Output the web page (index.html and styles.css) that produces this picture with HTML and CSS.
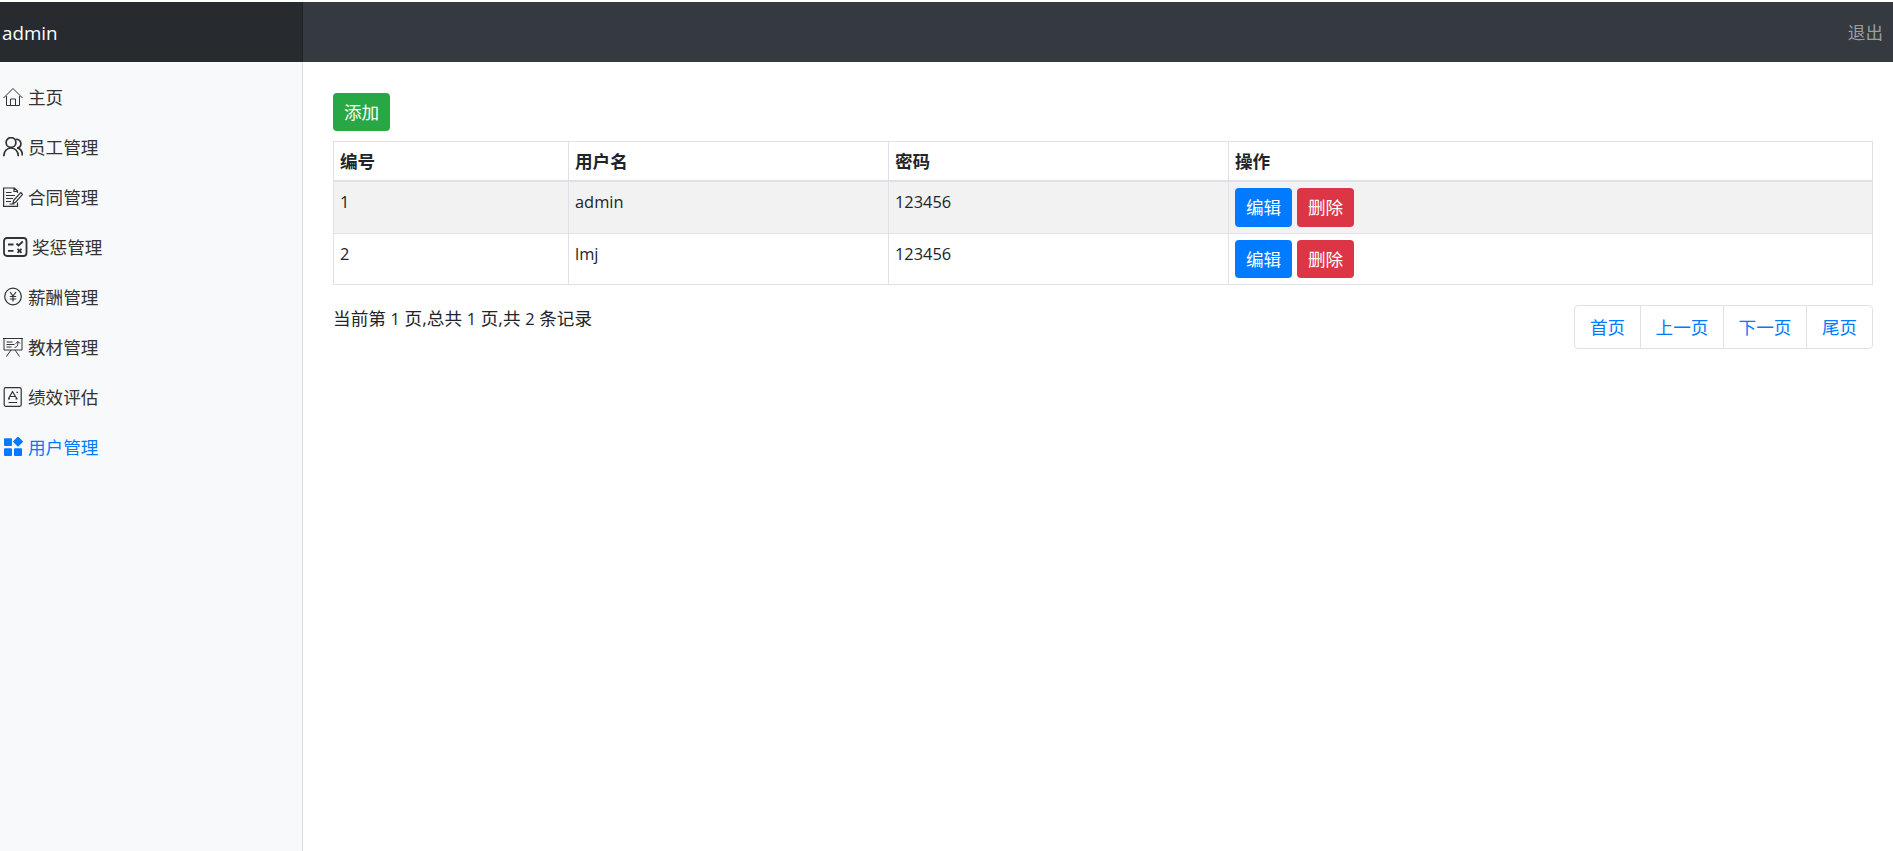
FILE: index.html
```html
<!DOCTYPE html>
<html lang="zh-CN">
<head>
<meta charset="utf-8">
<title>用户管理</title>
<link rel="stylesheet" href="styles.css">
</head>
<body>
<header class="navbar">
  <a class="brand">admin</a>
  <a class="logout">退出</a>
</header>
<div class="layout">
  <nav class="sidebar">
    <a class="nav-link"><svg class="icon thin" viewBox="0 0 20 20"><path d="M.5 11 10 1.500 19.500 11M3.500 9v9.500h13V9M7.500 18.500v-6.500h5v6.500"/></svg>主页</a>
    <a class="nav-link"><svg class="icon bold" viewBox="0 0 20 20"><circle cx="8" cy="5.500" r="4.900"/><path d="M.8 19.300c0-5 3-8.300 7.200-8.300s7.300 3.300 7.300 8.300M12.500 2.300c3.200-.3 5.400 1.700 5.400 4.400 0 2.300-1.600 3.900-3.700 4.200 3.200.8 5.200 3.800 5.200 7.600"/></svg>员工管理</a>
    <a class="nav-link"><svg class="icon" viewBox="0 0 20 20"><path d="M14.500 6V4l-3-3H.6v18.400h13.900V15.500M11 1v3.500h3.500M3 5.500h5.500M3 8.500h9M3 11.500h7M3 14.500h5"/><path d="m17.700 5.500 1.900 1.900-7 7.800-2.600.9.700-2.700zM6.500 17h5"/></svg>合同管理</a>
    <a class="nav-link"><svg class="icon wide" viewBox="0 0 25 20"><rect x="1" y="1" width="22.500" height="18" rx="3"/><path d="M5 7.500h5.500M5 13.800h5.500M13.500 6.500l2 2 4.300-4M14.500 11.800l4 4M18.500 11.800l-4 4"/></svg>奖惩管理</a>
    <a class="nav-link"><svg class="icon" viewBox="0 0 20 20"><circle cx="10" cy="9.500" r="8.300"/><path d="m7 5 3 4 3-4M10 9v5.500M6.800 9.500h6.400M6.800 12h6.400"/></svg>薪酬管理</a>
    <a class="nav-link"><svg class="icon thin" viewBox="0 0 20 20"><path d="M0 1.500h20M1 1.500v11.500h18V1.500M3.500 5h6M3.500 7.500h8M3.500 10h5M11.500 10.300c2.500 0 3.500-1.500 3.500-5.800M12.500 6.500l2.500-2 2 2M8 13l-4.500 6.500M12 13l4.500 6.500"/></svg>教材管理</a>
    <a class="nav-link"><svg class="icon" viewBox="0 0 20 20"><rect x="1.200" y=".7" width="17" height="18.600" rx="1.500"/><path d="m5.500 11.500 4-6.800 4.300 6.800M7 9.500h5.500M13.500 5.300h1.500M5 11.800h2M12.500 11.800h2M5.500 15.500h8.500"/></svg>绩效评估</a>
    <a class="nav-link active"><svg class="icon solid" viewBox="0 0 20 20"><rect x="1" y="1.300" width="8" height="7.800" rx="1"/><rect x="1" y="11.300" width="8" height="7.800" rx="1"/><rect x="11" y="11.300" width="8" height="7.800" rx="1"/><rect x="11.300" y="1" width="7.400" height="7.400" rx=".9" transform="rotate(45 15 4.700)"/></svg>用户管理</a>
  </nav>
  <main class="content">
    <a class="btn btn-success">添加</a>
    <table class="table">
      <colgroup><col class="c-id"><col class="c-name"><col class="c-pass"><col></colgroup>
      <thead><tr><th>编号</th><th>用户名</th><th>密码</th><th>操作</th></tr></thead>
      <tbody>
        <tr class="first striped"><td>1</td><td>admin</td><td>123456</td><td class="ops"><div class="actions"><a class="btn btn-primary">编辑</a><a class="btn btn-danger">删除</a></div></td></tr>
        <tr><td>2</td><td>lmj</td><td>123456</td><td class="ops"><div class="actions"><a class="btn btn-primary">编辑</a><a class="btn btn-danger">删除</a></div></td></tr>
      </tbody>
    </table>
    <div class="footer">
      <div class="summary">当前第 <span class="num">1</span> 页,总共 <span class="num">1</span> 页,共 <span class="num">2</span> 条记录</div>
      <div class="pagination"><a>首页</a><a class="long">上一页</a><a class="long">下一页</a><a>尾页</a></div>
    </div>
  </main>
</div>
</body>
</html>
```
FILE: styles.css
```css
* { box-sizing: border-box; }
body {
  margin: 0;
  padding-top: 2px;
  height: 851px;
  overflow: hidden;
  display: flex;
  flex-direction: column;
  background: #fff;
  color: #212529;
  font: 400 17.6px/26px "Open Sans", "Noto Sans CJK SC", sans-serif;
}
.navbar {
  flex: none;
  height: 60px;
  display: flex;
  justify-content: space-between;
  align-items: center;
  background: #343a40;
}
.brand {
  width: 303px;
  height: 60px;
  padding: 0 2px;
  font-size: 18.8px;
  line-height: 62px;
  color: #fff;
  background: #272b30;
  border-right: 1px solid #202428;
}
.logout { padding-right: 10px; color: #9a9da0; }
.layout { flex: 1; display: flex; min-height: 0; }
.sidebar {
  flex: none;
  width: 303px;
  padding-top: 10px;
  background: #f8f9fa;
  border-right: 1px solid #dcdddf;
}
.nav-link {
  height: 50px;
  padding-left: 3px;
  display: flex;
  align-items: center;
  gap: 5px;
  color: #333;
}
.nav-link.active { color: #007bff; }
.icon {
  flex: none;
  width: 20px;
  height: 20px;
  fill: none;
  stroke: currentColor;
  stroke-width: 1.2;
}
.icon.thin { stroke-width: 1; }
.icon.bold { stroke-width: 1.7; }
.icon.wide { width: 25px; margin-right: -1px; stroke-width: 1.8; }
.icon.solid { fill: currentColor; stroke: none; }
.content { flex: 1; padding: 31px 20px 0 30px; }
.btn {
  display: block;
  width: 57px;
  height: 38px;
  border-radius: 4px;
  line-height: 38px;
  text-align: center;
  color: #fff;
}
.btn-success { background: #28a745; }
.btn-primary { background: #007bff; }
.btn-danger { background: #dc3545; }
.table {
  width: 1540px;
  margin-top: 10px;
  table-layout: fixed;
  border-collapse: separate;
  border-spacing: 0;
  border-top: 1px solid #dee2e6;
  border-left: 1px solid #dee2e6;
}
.c-id { width: 235px; }
.c-name { width: 320px; }
.c-pass { width: 340px; }
.table th, .table td {
  border-right: 1px solid #dee2e6;
  border-bottom: 1px solid #dee2e6;
  padding: 6px;
  text-align: left;
  vertical-align: top;
}
.table th { height: 40px; font-weight: 700; border-bottom-width: 2px; }
.table td { height: 51px; padding-top: 7px; font-size: 16.4px; }
.table td.ops { padding-top: 6px; }
.table .first td { height: 52px; }
.striped td { background: #f2f2f2; }
.actions { display: flex; gap: 5px; font-size: 17.6px; }
.first .btn { height: 39px; }
.footer { display: flex; justify-content: space-between; padding-top: 20px; }
.summary { letter-spacing: .04px; }
.num { font-size: 16.4px; }
.pagination {
  display: flex;
  height: 44px;
  border: 1px solid #dee2e6;
  border-radius: 4px;
}
.pagination a {
  width: 66px;
  line-height: 42px;
  text-align: center;
  color: #007bff;
  border-right: 1px solid #dee2e6;
}
.pagination a.long { width: 83px; }
.pagination a:last-child { border-right: 0; width: 65px; }
```
